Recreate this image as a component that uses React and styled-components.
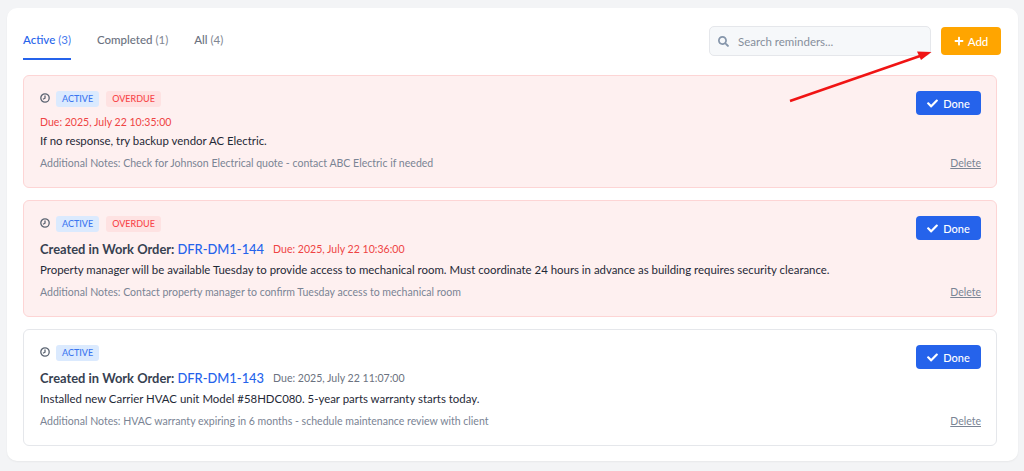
import React from "react";
import styled, {createGlobalStyle} from "styled-components";
import {FaSearch, FaPlus, FaCheck} from "react-icons/fa";

const reminders = [
    {
        overdue: true,
        due: "Due: 2025, July 22 10:35:00",
        body: "If no response, try backup vendor AC Electric.",
        notes: "Additional Notes: Check for Johnson Electrical quote - contact ABC Electric if needed",
    },
    {
        overdue: true,
        workOrder: "DFR-DM1-144",
        due: "Due: 2025, July 22 10:36:00",
        body: "Property manager will be available Tuesday to provide access to mechanical room. Must coordinate 24 hours in advance as building requires security clearance.",
        notes: "Additional Notes: Contact property manager to confirm Tuesday access to mechanical room",
    },
    {
        overdue: false,
        workOrder: "DFR-DM1-143",
        due: "Due: 2025, July 22 11:07:00",
        body: "Installed new Carrier HVAC unit Model #58HDC080. 5-year parts warranty starts today.",
        notes: "Additional Notes: HVAC warranty expiring in 6 months - schedule maintenance review with client",
    },
];

const ClockIcon = () => (
    <svg width="10" height="10" viewBox="0 0 10 10" fill="none" stroke="#5b6472" strokeWidth="1.3">
        <circle cx="5" cy="5" r="4.2" />
        <path d="M5 2.4V5.2L3 6.3" />
    </svg>
);

const ReminderCard = ({item}) => (
    <Card $overdue={item.overdue}>
        <CardMain>
            <BadgeRow>
                <ClockIcon />
                <Badges>
                    <Badge $variant="active">ACTIVE</Badge>
                    {item.overdue && <Badge $variant="overdue">OVERDUE</Badge>}
                </Badges>
            </BadgeRow>
            <TitleRow>
                {item.workOrder && (
                    <Title>
                        Created in Work Order: <WorkOrderLink>{item.workOrder}</WorkOrderLink>
                    </Title>
                )}
                <DueDate $overdue={item.overdue}>{item.due}</DueDate>
            </TitleRow>
            <Body>{item.body}</Body>
            <Notes>{item.notes}</Notes>
        </CardMain>
        <CardSide>
            <DoneButton>
                <FaCheck size={11} />
                Done
            </DoneButton>
            <DeleteLink>Delete</DeleteLink>
        </CardSide>
    </Card>
);

const App = () => (
    <Page>
        <GlobalStyle />
        <Panel>
            <Toolbar>
                <Tabs>
                    <Tab $active>Active <span>(3)</span></Tab>
                    <Tab>Completed <span>(1)</span></Tab>
                    <Tab>All <span>(4)</span></Tab>
                </Tabs>
                <Actions>
                    <SearchBox>
                        <FaSearch size={11} color="#8696ab" />
                        <SearchText>Search reminders...</SearchText>
                    </SearchBox>
                    <AddButton>
                        <FaPlus size={10} />
                        Add
                    </AddButton>
                </Actions>
            </Toolbar>
            <CardList>
                {reminders.map((item) => (
                    <ReminderCard key={item.due} item={item} />
                ))}
            </CardList>
        </Panel>
        <Arrow width="1024" height="471" viewBox="0 0 1024 471">
            <path d="M790 101L920 56" stroke="#f01414" strokeWidth="2.4" />
            <path d="M931.5 52L917 51.5L921 60Z" fill="#f01414" />
        </Arrow>
    </Page>
);

export default App;

const GlobalStyle = createGlobalStyle`
    html, body {
        margin: 0;
        padding: 0;
        background: #f3f4f6;
    }

    * {
        box-sizing: border-box;
    }
`;

const Page = styled.div`
    position: relative;
    width: 1024px;
    height: 471px;
    padding: 8px 6px 10px 7px;
    overflow: hidden;
    font-family: "Lato", "Noto Sans", sans-serif;
`;

const Panel = styled.div`
    height: 453px;
    padding: 0 21px 0 16px;
    background: #ffffff;
    border-radius: 10px;
    box-shadow: 0 1px 2px rgba(0, 0, 0, 0.05);
`;

const Toolbar = styled.div`
    display: flex;
    justify-content: space-between;
    height: 67px;
    margin-right: -4px;
    padding-top: 18px;
`;

const Tabs = styled.div`
    display: flex;
    gap: 26px;
`;

const Tab = styled.div`
    height: 34px;
    padding-top: 6px;
    font-size: 11.5px;
    line-height: 16px;
    font-weight: 500;
    white-space: nowrap;
    color: ${(props) => (props.$active ? "#2563eb" : "#6b7280")};
    border-bottom: 2px solid ${(props) => (props.$active ? "#2563eb" : "transparent")};

    span {
        font-weight: 400;
        opacity: 0.85;
    }
`;

const Actions = styled.div`
    display: flex;
    align-items: flex-start;
    gap: 10px;
`;

const SearchBox = styled.div`
    display: flex;
    align-items: center;
    gap: 9px;
    width: 222px;
    height: 30px;
    padding-left: 8px;
    background: #f6f8fa;
    border: 1px solid #e5e7eb;
    border-radius: 5px;
`;

const SearchText = styled.span`
    font-size: 11.5px;
    color: #868f9c;
`;

const AddButton = styled.button`
    display: flex;
    align-items: center;
    justify-content: center;
    gap: 4px;
    width: 60px;
    height: 28px;
    margin-top: 1px;
    padding: 0;
    font: inherit;
    font-size: 11.5px;
    font-weight: 500;
    color: #ffffff;
    background: #ffa500;
    border: 0;
    border-radius: 4px;
`;

const CardList = styled.div`
    display: flex;
    flex-direction: column;
    gap: 12.5px;
`;

const Card = styled.div`
    display: flex;
    justify-content: space-between;
    padding: 15px 15px 16px 16px;
    background: ${(props) => (props.$overdue ? "#fef0f0" : "#ffffff")};
    border: 1px solid ${(props) => (props.$overdue ? "#fdd5d5" : "#e5e7eb")};
    border-radius: 6px;
`;

const CardMain = styled.div`
    display: flex;
    flex-direction: column;
    min-width: 0;
`;

const BadgeRow = styled.div`
    display: flex;
    align-items: center;
    gap: 6px;
    height: 16px;

    svg {
        margin-top: -2px;
    }
`;

const Badges = styled.div`
    display: flex;
    gap: 7px;
`;

const Badge = styled.span`
    padding: 0 6px;
    font-size: 9px;
    line-height: 16px;
    font-weight: 500;
    border-radius: 3px;
    color: ${(props) => (props.$variant === "overdue" ? "#f8474a" : "#3b76f0")};
    background: ${(props) => (props.$variant === "overdue" ? "#fee2e2" : "#dbeafe")};
`;

const TitleRow = styled.div`
    display: flex;
    align-items: center;
    gap: 9px;
    min-height: 20px;
    margin-top: 5px;
`;

const Title = styled.span`
    font-size: 12.9px;
    line-height: 24px;
    font-weight: 700;
    color: #374151;
`;

const WorkOrderLink = styled.span`
    font-weight: 500;
    color: #2563eb;
`;

const DueDate = styled.span`
    font-size: 10.55px;
    color: ${(props) => (props.$overdue ? "#ef4444" : "#6b7280")};
`;

const Body = styled.p`
    margin: 0;
    font-size: 11.42px;
    line-height: 18px;
    color: #1f2937;
    white-space: nowrap;
`;

const Notes = styled.p`
    margin: 4.5px 0 0;
    font-size: 10.55px;
    line-height: 16px;
    color: #7a8494;
    white-space: nowrap;
`;

const CardSide = styled.div`
    display: flex;
    flex-direction: column;
    align-items: flex-end;
    justify-content: space-between;
`;

const DoneButton = styled.button`
    display: flex;
    align-items: center;
    justify-content: center;
    gap: 5px;
    width: 65px;
    height: 24px;
    padding: 0;
    font: inherit;
    font-size: 11px;
    font-weight: 500;
    color: #ffffff;
    background: #2563eb;
    border: 0;
    border-radius: 4px;
`;

const DeleteLink = styled.a`
    font-size: 10.5px;
    line-height: 16px;
    color: #7a8494;
    text-decoration: underline;
`;

const Arrow = styled.svg`
    position: absolute;
    top: 0;
    left: 0;
    pointer-events: none;
`;
